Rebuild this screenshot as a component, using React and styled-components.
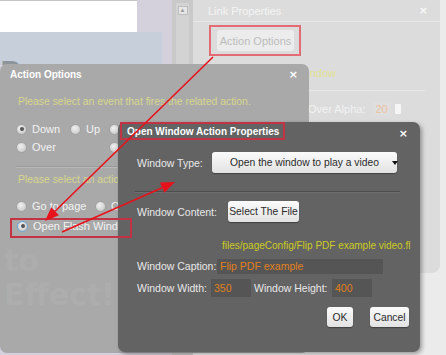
import React from 'react';
import styled, { createGlobalStyle } from 'styled-components';

const GlobalStyle = createGlobalStyle`
  html, body { margin: 0; padding: 0; }
  body {
    font-family: "Liberation Sans", Arial, sans-serif;
    font-size: 11px;
    background: #e9e9e9;
  }
`;

const Screen = styled.div`
  position: relative;
  width: 446px;
  height: 355px;
  overflow: hidden;
  background: #ebebeb;
`;

// ---- the app behind the dialogs ----
const Desk = styled.div`
  display: flex;
  height: 355px;
`;
const Workspace = styled.div`
  width: 172px;
  background: #d4d0dc;
  display: flex;
  flex-direction: column;
`;
const WhitePage = styled.div`
  width: 137px;
  height: 31px;
  background: #ffffff;
  border-top: 1px solid #c4c4c4;
`;
const BlueBlock = styled.div`
  width: 162px;
  height: 33px;
  background: #c6cfda;
  overflow: hidden;
  font-family: "DejaVu Sans", sans-serif;
  font-weight: bold;
  font-size: 28px;
  color: #8e949c;
  line-height: 1;
  padding-top: 27px;
  box-sizing: border-box;
`;
const ScrollCol = styled.div`
  width: 21px;
  background: #c9c9c9;
  display: flex;
  justify-content: center;
  padding-top: 3px;
  box-sizing: border-box;
`;
const Track = styled.div`
  width: 13px;
  height: 300px;
  background: #d3d3d3;
  display: flex;
  justify-content: center;
  padding-top: 3px;
  box-sizing: border-box;
`;
const UpBtn = styled.div`
  width: 8px;
  height: 7px;
  background: #e6e6e6;
  border: 1px solid #bdbdbd;
  color: #9a9a9a;
  font-size: 6px;
  line-height: 7px;
  text-align: center;
`;
const Panel = styled.div`
  flex: 1;
  height: 273px;
  margin-right: 6px;
  background: #dcdcdc;
  border-bottom-right-radius: 8px;
  display: flex;
  flex-direction: column;
`;
const PanelHead = styled.div`
  height: 21px;
  display: flex;
  align-items: center;
  justify-content: space-between;
  padding: 0 12px 0 15px;
  border-bottom: 1px solid #e8e8e8;
  color: #f4f4f4;
  font-size: 11px;
`;
const Close = styled.span`
  color: ${p => p.$c || '#ffffff'};
  font-family: "DejaVu Sans", sans-serif;
  font-weight: bold;
  font-size: 11px;
`;
const HiliteBox = styled.div`
  align-self: flex-start;
  margin: ${p => p.$m || '0'};
  border: 2px solid ${p => p.$c || 'transparent'};
  padding: ${p => p.$p || '0'};
  display: flex;
  align-items: center;
  white-space: nowrap;
`;
const GhostButton = styled.div`
  width: 77px;
  height: 21px;
  border-radius: 3px;
  background: #ececec;
  color: #bcbcbc;
  display: flex;
  align-items: center;
  justify-content: center;
`;
const PanelRow = styled.div`
  height: ${p => p.$h}px;
  display: flex;
  align-items: center;
  padding-left: ${p => p.$pl}px;
  color: ${p => p.$c || '#f2f2f2'};
  border-bottom: ${p => (p.$line ? '1px solid #e8e8e8' : 'none')};
  margin-right: 15px;
  gap: 4px;
  white-space: nowrap;
`;
const AlphaBox = styled.div`
  width: 16px;
  height: 14px;
  color: #eec3a0;
  background: #dedede;
  display: flex;
  align-items: center;
  padding-left: 2px;
  margin-left: 4px;
`;
const Spin = styled.div`
  width: 6px;
  height: 10px;
  background: #f6f6f6;
  border-radius: 1px;
`;

// ---- dialogs ----
const Window = styled.div`
  position: absolute;
  left: ${p => p.$x}px;
  top: ${p => p.$y}px;
  width: ${p => p.$w}px;
  height: ${p => p.$h}px;
  background: ${p => p.$bg};
  border-radius: 7px;
  box-shadow: ${p => (p.$shadow ? '2px 2px 4px rgba(0,0,0,0.35)' : 'none')};
  display: flex;
  flex-direction: column;
  box-sizing: border-box;
`;
const TitleBar = styled.div`
  height: ${p => p.$h}px;
  display: flex;
  align-items: center;
  justify-content: space-between;
  padding: 0 ${p => p.$pr}px 0 ${p => p.$pl}px;
  color: #ffffff;
  font-weight: bold;
  font-size: 10px;
`;
const Hint = styled.div`
  color: ${p => p.$c || '#d7d78c'};
  font-size: ${p => p.$fs || 10.4}px;
  margin: ${p => p.$m};
  height: 14px;
  line-height: 14px;
  white-space: nowrap;
`;
const OptRow = styled.div`
  display: flex;
  align-items: center;
  height: 18px;
  margin-top: ${p => p.$mt || 0}px;
  padding-left: ${p => p.$pl || 16}px;
  color: #f0f0f0;
  white-space: nowrap;
`;
const Opt = styled.div`
  width: ${p => (p.$w ? `${p.$w}px` : 'auto')};
  display: flex;
  align-items: center;
  gap: 5px;
  color: #f2f2f2;
`;
const Radio = styled.span`
  width: 11px;
  height: 11px;
  border-radius: 50%;
  box-sizing: border-box;
  flex: none;
  border: 1px solid ${p => (p.$blue ? '#6fa8dc' : '#a2a2a2')};
  background: radial-gradient(circle at 40% 35%, #f0f0f0 0%, #cfcfcf 70%, #bdbdbd 100%);
  display: flex;
  align-items: center;
  justify-content: center;
  &::after {
    content: '';
    width: 4px;
    height: 4px;
    border-radius: 50%;
    background: ${p => (p.$on ? '#555' : 'transparent')};
  }
`;
const Rule = styled.div`
  height: 0;
  border-top: 1px solid ${p => p.$c};
  border-bottom: 1px solid ${p => p.$c2};
  margin: ${p => p.$m};
`;
const FormRow = styled.div`
  display: flex;
  align-items: center;
  height: ${p => p.$h || 21}px;
  margin: ${p => p.$m || '0'};
  padding-left: 19px;
  color: #e8e8e8;
  font-size: 10.5px;
  white-space: nowrap;
`;
const Label = styled.span`
  width: ${p => (p.$w ? `${p.$w}px` : 'auto')};
  flex: none;
`;
const Btn = styled.div`
  width: ${p => p.$w}px;
  height: ${p => p.$h || 21}px;
  border-radius: 3px;
  background: linear-gradient(#fbfbfb, #e2e2e2);
  box-shadow: 0 1px 1px rgba(0,0,0,0.35);
  color: #2a2a2a;
  font-size: 10.3px;
  display: flex;
  align-items: center;
  justify-content: center;
  position: relative;
  flex: none;
`;
const Caret = styled.span`
  position: absolute;
  right: -1px;
  top: 9px;
  width: 0;
  height: 0;
  border-left: 3px solid transparent;
  border-right: 3px solid transparent;
  border-top: 4px solid #111;
`;
const Field = styled.div`
  width: ${p => p.$w}px;
  height: ${p => p.$h}px;
  background: #555555;
  color: #e0801c;
  display: flex;
  align-items: center;
  padding-left: 3px;
  box-sizing: border-box;
  flex: none;
`;
const Footer = styled.div`
  display: flex;
  justify-content: flex-end;
  gap: 17px;
  padding-right: 11px;
  margin-top: 10px;
`;
const Ghost = styled.div`
  margin: ${p => p.$m};
  font-family: "DejaVu Sans", sans-serif;
  font-size: 30px;
  font-weight: bold;
  color: #adadad;
  line-height: 1;
`;
const Annotations = styled.svg`
  position: absolute;
  left: 0;
  top: 0;
  pointer-events: none;
`;

export default function App() {
  return (
    <Screen>
      <GlobalStyle />
      <Desk>
        <Workspace>
          <WhitePage />
          <BlueBlock>Pro</BlueBlock>
        </Workspace>
        <ScrollCol>
          <Track>
            <UpBtn>▲</UpBtn>
          </Track>
        </ScrollCol>
        <Panel>
          <PanelHead>
            Link Properties
            <Close $c="#f8f8f8">×</Close>
          </PanelHead>
          <HiliteBox $m="3px 0 0 16px" $c="#e26b74" $p="3px 5px 3px 6px">
            <GhostButton>Action Options</GhostButton>
          </HiliteBox>
          <PanelRow $h={34} $pl={44} $c="#e2e292" $line>Open Flash Window</PanelRow>
          <PanelRow $h={36} $pl={115}>
            Over Alpha:
            <AlphaBox>20</AlphaBox>
            <Spin />
          </PanelRow>
        </Panel>
      </Desk>

      <Window $x={0} $y={64} $w={309} $h={289} $bg="#a9a9a9">
        <TitleBar $h={21} $pl={10} $pr={11}>
          Action Options
          <Close>×</Close>
        </TitleBar>
        <Hint $m="10px 0 0 18px">Please select an event that fires the related action.</Hint>
        <OptRow $mt={11}>
          <Opt $w={54}><Radio $on />Down</Opt>
          <Opt $w={39}><Radio />Up</Opt>
          <Opt><Radio /></Opt>
        </OptRow>
        <OptRow>
          <Opt $w={93}><Radio />Over</Opt>
          <Opt><Radio /></Opt>
        </OptRow>
        <Rule $m="10px 0 0 16px" $c="#9a9a9a" $c2="#b8b8b8" />
        <Hint $m="5px 0 0 18px">Please select an action...</Hint>
        <OptRow $mt={10}>
          <Opt $w={79}><Radio />Go to page</Opt>
          <Opt><Radio />O</Opt>
        </OptRow>
        <HiliteBox $m="1px 0 0 10px" $p="2px 4px 2px 5px">
          <Opt><Radio $on $blue />Open Flash Window</Opt>
        </HiliteBox>
        <Ghost $m="10px 0 0 4px">to</Ghost>
        <Ghost $m="4px 0 0 4px">Effect!</Ghost>
      </Window>

      <Window $x={118} $y={122} $w={302} $h={230} $bg="#636363" $shadow>
        <TitleBar $h={22} $pl={2} $pr={12}>
          <HiliteBox $c="#c23444" $p="0 4px 0 5px" style={{ height: 14 }}>
            Open Window Action Properties
          </HiliteBox>
          <Close>×</Close>
        </TitleBar>
        <FormRow $m="8px 0 0 0">
          <Label $w={75}>Window Type:</Label>
          <Btn $w={185}>
            Open the window to play a video
            <Caret />
          </Btn>
        </FormRow>
        <Rule $m="18px 20px 0 17px" $c="#4e4e4e" $c2="#6e6e6e" />
        <FormRow $m="8px 0 0 0">
          <Label $w={91}>Window Content:</Label>
          <Btn $w={71}>Select The File</Btn>
        </FormRow>
        <Hint $c="#cccc1e" $fs={10} $m="17px 0 0 104px">files/pageConfig/Flip PDF example video.fl</Hint>
        <FormRow $m="5px 0 0 0" $h={16}>
          <Label $w={80}>Window Caption:</Label>
          <Field $w={166} $h={15}>Flip PDF example</Field>
        </FormRow>
        <FormRow $m="5px 0 0 0" $h={18}>
          <Label $w={74}>Window Width:</Label>
          <Field $w={40} $h={18}>350</Field>
          <Label style={{ marginLeft: 3 }} $w={78}>Window Height:</Label>
          <Field $w={40} $h={18}>400</Field>
        </FormRow>
        <Footer>
          <Btn $w={26} $h={20}>OK</Btn>
          <Btn $w={39} $h={20}>Cancel</Btn>
        </Footer>
      </Window>

      <Annotations width="446" height="355" viewBox="0 0 446 355">
        <rect x="11" y="219" width="120" height="18" fill="none" stroke="#c23444" strokeWidth="2" />
        <g stroke="#e8121c" strokeWidth="1.6" fill="#e8121c">
          <line x1="213" y1="57" x2="55" y2="211.2" />
          <polygon points="45,221 58.9,215.2 51.2,207.3" stroke="none" />
          <line x1="62" y1="232" x2="162.2" y2="187.7" />
          <polygon points="175,182 164.4,192.7 160,182.6" stroke="none" />
        </g>
      </Annotations>
    </Screen>
  );
}
